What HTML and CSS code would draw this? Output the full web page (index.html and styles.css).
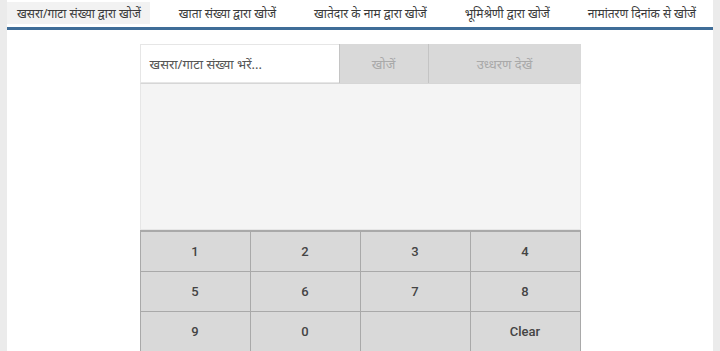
FILE: index.html
```html
<!DOCTYPE html>
<html lang="hi">
<head>
<meta charset="utf-8">
<title>खसरा/गाटा संख्या द्वारा खोजें</title>
<link rel="stylesheet" href="styles.css">
</head>
<body>
<div class="page">
  <nav class="tabs">
    <div class="tab active">खसरा/गाटा संख्या द्वारा खोजें</div>
    <div class="tab">खाता संख्या द्वारा खोजें</div>
    <div class="tab">खातेदार के नाम द्वारा खोजें</div>
    <div class="tab">भूमिश्रेणी द्वारा खोजें</div>
    <div class="tab">नामांतरण दिनांक से खोजें</div>
  </nav>
  <div class="rule"></div>
  <main class="card">
    <div class="search-row">
      <div class="input">खसरा/गाटा संख्या भरें...</div>
      <div class="btn btn-search">खोजें</div>
      <div class="btn btn-view">उध्धरण देखें</div>
    </div>
    <div class="display"></div>
    <div class="keypad">
      <div class="key">1</div>
      <div class="key">2</div>
      <div class="key">3</div>
      <div class="key">4</div>
      <div class="key">5</div>
      <div class="key">6</div>
      <div class="key">7</div>
      <div class="key">8</div>
      <div class="key">9</div>
      <div class="key">0</div>
      <div class="key"></div>
      <div class="key">Clear</div>
    </div>
  </main>
</div>
</body>
</html>
```

FILE: styles.css
```css
html, body {
  margin: 0;
  padding: 0;
  height: 100%;
}
body {
  background: #ebebeb;
  font-family: "Noto Sans", "Roboto", sans-serif;
  overflow: hidden;
}
.page {
  margin: 0 7px;
  padding-top: 2px;
  background: #fff;
  min-height: 100%;
  box-sizing: border-box;
}
.tabs {
  display: flex;
  justify-content: space-between;
  height: 22px;
  padding-right: 8px;
  background: #fff;
}
.tab {
  display: flex;
  align-items: center;
  padding: 0 9px 0 10px;
  font-size: 12px;
  color: #3a3a3a;
  white-space: nowrap;
}
.tab.active {
  background: #f2f2f2;
}
.rule {
  margin-top: 3px;
  height: 3px;
  background: #3f6d98;
}
.card {
  width: 441px;
  margin: 14px auto 0;
}
.search-row {
  display: flex;
  height: 39px;
}
.input {
  width: 199px;
  box-sizing: border-box;
  border: 1px solid #e6e6e6;
  border-right: none;
  background: #fff;
  display: flex;
  align-items: center;
  padding-left: 9px;
  font-size: 13px;
  color: #555;
}
.btn {
  display: flex;
  align-items: center;
  justify-content: center;
  background: #d9d9d9;
  border-left: 1px solid #c4c4c4;
  font-size: 13px;
  color: #a9a9a9;
  box-sizing: border-box;
}
.btn-search { width: 89px; }
.btn-view { flex: 1; }
.display {
  height: 147px;
  box-sizing: border-box;
  background: #f4f4f4;
  border: 1px solid #e6e6e6;
  border-top: 1px solid #d6d6d6;
}
.keypad {
  display: grid;
  grid-template-columns: repeat(4, 1fr);
  grid-auto-rows: 40px;
  border-top: 2px solid #a9a9a9;
  border-left: 1px solid #a9a9a9;
  background: #d9d9d9;
}
.key {
  display: flex;
  align-items: center;
  justify-content: center;
  border-right: 1px solid #a9a9a9;
  border-bottom: 1px solid #a9a9a9;
  font-family: "Roboto", sans-serif;
  font-weight: 500;
  font-size: 13px;
  color: #444;
}
```
